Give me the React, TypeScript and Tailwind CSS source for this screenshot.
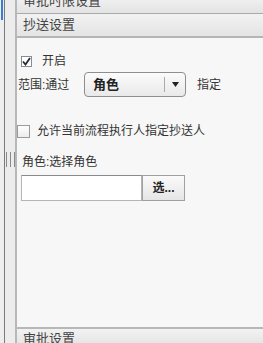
export default function App() {
  const font = { fontFamily: '"Liberation Sans", "Noto Sans CJK SC", sans-serif' };
  return (
    <div
      className="flex h-[343px] w-[263px] overflow-hidden bg-[#f7f7f7] text-[12px] text-[#333]"
      style={font}
    >
      {/* left splitter strip */}
      <div className="relative w-[5px] shrink-0 border-r border-[#7a7a7a] bg-[#eeeeee]">
        <div className="absolute left-[1px] top-0 h-[20px] w-[2px] bg-[#3a7bd5]" />
      </div>
      <div className="flex w-[10px] shrink-0 flex-col items-center bg-[#ececec] pt-[152px]">
        <div className="flex h-[15px] gap-[1px]">
          <div className="w-[1px] bg-[#8a8a8a]" />
          <div className="w-[1px] bg-[#ececec]" />
          <div className="w-[1px] bg-[#8a8a8a]" />
          <div className="w-[1px] bg-[#ececec]" />
          <div className="w-[1px] bg-[#8a8a8a]" />
        </div>
      </div>
      <div className="w-[2px] shrink-0 bg-[#b8b8b8]" />

      {/* main column */}
      <div className="flex min-w-0 flex-1 flex-col">
        <div className="h-[14px] shrink-0 overflow-hidden border-b border-[#a9a9a9] bg-gradient-to-b from-[#efefef] to-[#e3e3e3] pl-[6px]">
          <div className="-mt-[6px] text-[13px] leading-[14px] text-[#444]">审批时限设置</div>
        </div>
        <div className="flex h-[24px] shrink-0 items-center border-b-2 border-[#b5b5b5] bg-gradient-to-b from-[#f2f2f2] to-[#e4e4e4] pl-[6px]">
          <span className="text-[13px] text-[#444]">抄送设置</span>
        </div>

        <div className="flex flex-1 flex-col">
          <div className="mt-[14px] flex h-[18px] items-center pl-[4px]">
            <div className="flex h-[11px] w-[11px] items-center justify-center border border-[#8c8c8c] bg-white">
              <svg width="9" height="9" viewBox="0 0 9 9">
                <path d="M1 4.5 L3.5 7.5 L8 1" fill="none" stroke="#1f2a3a" strokeWidth="1.8" />
              </svg>
            </div>
            <span className="ml-[10px] text-[12px]">开启</span>
          </div>

          <div className="mt-[2px] flex items-center pl-[1px]">
            <span className="w-[66px]">范围:通过</span>
            <div className="flex h-[25px] w-[102px] items-center rounded-[4px] border border-[#8e8e8e] bg-gradient-to-b from-[#fbfbfb] to-[#e9e9e9]">
              <span className="flex-1 pl-[8px] text-[13px] font-bold text-[#222]">角色</span>
              <div className="h-[15px] w-[1px] bg-[#aaa]" />
              <div className="flex w-[20px] items-center justify-center">
                <svg width="7" height="5" viewBox="0 0 7 5">
                  <path d="M0 0 H7 L3.5 5 Z" fill="#222" />
                </svg>
              </div>
            </div>
            <span className="ml-[11px]">指定</span>
          </div>

          <div className="mt-[25px] flex h-[18px] items-center">
            <div className="h-[13px] w-[13px] border border-[#9a9a9a] bg-gradient-to-b from-white to-[#ececec]" />
            <span className="ml-[7px] text-[12px]">允许当前流程执行人指定抄送人</span>
          </div>

          <div className="mt-[13px] h-[18px] pl-[5px] text-[12px] leading-[18px]">角色:选择角色</div>

          <div className="mt-[4px] flex pl-[4px]">
            <div className="h-[26px] w-[121px] border border-[#b5b5b5] border-t-[#8a8a8a] bg-white" />
            <div className="flex h-[26px] w-[43px] items-center justify-center border border-[#a0a0a0] bg-gradient-to-b from-[#fafafa] to-[#e6e6e6] text-[12px] font-bold text-[#222]">
              选...
            </div>
          </div>

          <div className="flex-1" />
        </div>

        <div className="h-[16px] shrink-0 overflow-hidden border-t-2 border-[#b8b8b8] bg-gradient-to-b from-[#f2f2f2] to-[#e6e6e6] pl-[6px]">
          <div className="mt-[2px] text-[13px] leading-[16px] text-[#444]">审批设置</div>
        </div>
      </div>
    </div>
  );
}
